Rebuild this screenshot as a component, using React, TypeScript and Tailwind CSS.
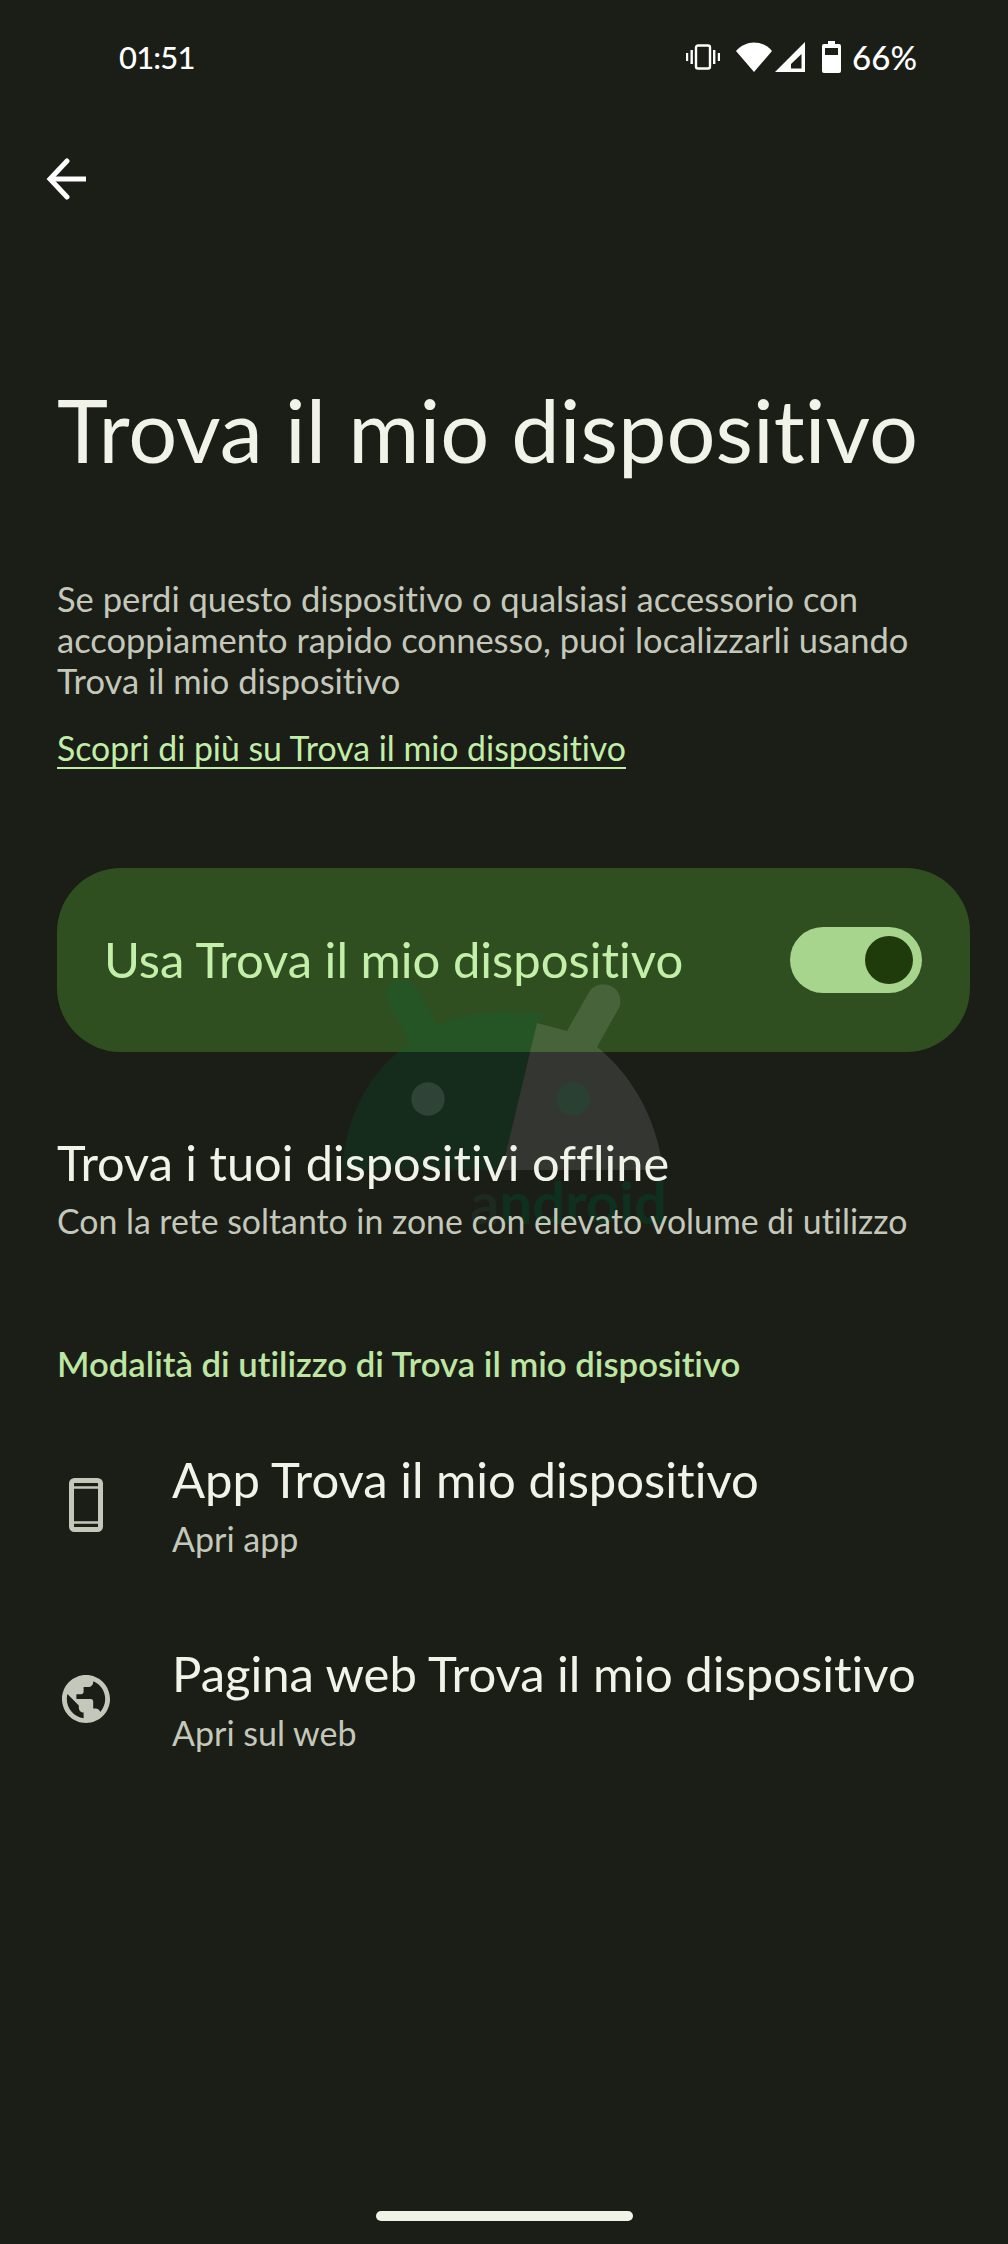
const SANS = "font-['Lato','Open_Sans',sans-serif] [font-variant-ligatures:none]";

function StatusIcons() {
  return (
    <div className="flex items-center text-white">
      {/* vibrate */}
      <svg width="34" height="26" viewBox="0 0 34 26" className="mr-[16px]" fill="none">
        <rect x="10" y="1.500" width="14" height="23" rx="2" stroke="white" strokeWidth="2.400" />
        <rect x="4.500" y="6" width="2.400" height="14" fill="white" />
        <rect x="27" y="6" width="2.400" height="14" fill="white" />
        <rect x="0" y="9" width="2.200" height="8" fill="white" />
        <rect x="31.800" y="9" width="2.200" height="8" fill="white" />
      </svg>
      {/* wifi */}
      <svg width="36" height="30" viewBox="0 0 36 30" className="mr-[3px]">
        <path d="M0 9 C10 -2.500 26 -2.500 36 9 L18 30 Z" fill="white" />
      </svg>
      {/* signal */}
      <svg width="30" height="30" viewBox="0 0 30 30" className="mr-[17px]">
        <path fillRule="evenodd" d="M30 0 V30 H0 Z M26.500 12 L16 22 V26.500 H26.500 Z" fill="white" />
      </svg>
      {/* battery */}
      <svg width="19" height="32" viewBox="0 0 19 32" className="mr-[11px]">
        <path fillRule="evenodd" d="M6 0 H13 V3 H17 Q19 3 19 5 V30 Q19 32 17 32 H2 Q0 32 0 30 V5 Q0 3 2 3 H6 Z M3 7 V14 H16 V7 Z" fill="white" />
      </svg>
      <span className="text-[33px] leading-none font-medium">66%</span>
    </div>
  );
}

function AndroidWatermark() {
  return (
    <div className="absolute z-10 left-[340px] top-[980px] w-[330px] h-[250px] pointer-events-none">
      <svg width="330" height="192" viewBox="0 0 330 192" className="absolute left-0 top-0">
        {/* left half */}
        <path
          d="M2 190 C6 135 30 90 70 63 L48 23 A16 16 0 0 1 76 7 L98 45 C130 31 175 27 208 35 L197 43 L162 190 Z"
          fill="#00713c"
          fillOpacity="0.19"
        />
        {/* right half */}
        <path
          d="M197 43 L227 51 L249.400 11.400 A17 17 0 0 1 278.600 28.600 L257 67 C296 98 318 145 323 190 L162 190 Z"
          fill="#ffffff"
          fillOpacity="0.115"
        />
        <circle cx="88" cy="119" r="16.700" fill="#ffffff" fillOpacity="0.115" />
        <circle cx="233" cy="119" r="16.700" fill="#00713c" fillOpacity="0.19" />
      </svg>
      <span className="absolute left-[130px] top-[193px] text-[58px] leading-none font-bold text-[#10301f]">
        <span className="text-[#1e2a20]">a</span>ndroid
      </span>
    </div>
  );
}

function LinkRow({ title, sub, icon, className }: { title: string; sub: string; icon: React.ReactNode; className: string }) {
  return (
    <div className={`relative z-20 flex ${className}`}>
      <div className="w-[115px] pl-[12px] shrink-0 flex items-center">{icon}</div>
      <div>
        <div className="text-[49px] leading-[58px] text-[#f1f2e8]">{title}</div>
        <div className="text-[34px] leading-[42px] mt-[10px] text-[#c4c8ba]">{sub}</div>
      </div>
    </div>
  );
}

export default function App() {
  return (
    <div className={`relative w-[1008px] h-[2244px] bg-[#1b1d17] overflow-hidden ${SANS}`}>
      {/* status bar */}
      <div className="h-[114px] pl-[119px] pr-[91px] flex items-center justify-between text-white">
        <span className="text-[31px] leading-none font-medium tracking-[-0.8px]">01:51</span>
        <StatusIcons />
      </div>

      {/* back */}
      <div className="h-[66px] mt-[32px] pl-[46px] flex items-center">
        <svg width="44" height="42" viewBox="0 0 44 42" fill="none" stroke="white" strokeWidth="5">
          <path d="M21 3 L4 21 L21 39" strokeLinecap="round" />
          <path d="M5 21 H40" />
        </svg>
      </div>

      <div className="pl-[57px] pr-[38px]">
        <h1 className="relative z-20 mt-[170px] text-[86.500px] leading-[96px] font-normal text-[#f1f2e8] whitespace-nowrap">
          Trova il mio dispositivo
        </h1>

        <p className="relative z-20 mt-[100px] text-[34.500px] leading-[41px] text-[#c4c8ba] whitespace-nowrap">
          Se perdi questo dispositivo o qualsiasi accessorio con
          <br />
          accoppiamento rapido connesso, puoi localizzarli usando
          <br />
          Trova il mio dispositivo
        </p>
        <div className="relative z-20 mt-[27px] text-[33.800px] leading-[41px] text-[#c1eea6] underline underline-offset-[6px] decoration-2">
          Scopri di più su Trova il mio dispositivo
        </div>

        <div className="mt-[99px] h-[184px] rounded-[64px] bg-[#2f4f20] pl-[47px] pr-[48px] flex items-center justify-between">
          <span className="relative z-20 text-[49px] text-[#c4efa8]">Usa Trova il mio dispositivo</span>
          <div className="relative z-20 w-[132px] h-[66px] rounded-full bg-[#a8d58e] flex items-center justify-end pr-[9px]">
            <div className="w-[48px] h-[48px] rounded-full bg-[#1f3a0b]" />
          </div>
        </div>

        <div className="relative z-20 mt-[81px] text-[48.700px] leading-[58px] text-[#f1f2e8]">Trova i tuoi dispositivi offline</div>
        <div className="relative z-20 mt-[9px] text-[33.800px] leading-[42px] text-[#c4c8ba]">
          Con la rete soltanto in zone con elevato volume di utilizzo
        </div>

        <div className="relative z-20 mt-[101px] text-[34.700px] leading-[42px] font-semibold text-[#bce6a2]">
          Modalità di utilizzo di Trova il mio dispositivo
        </div>

        <LinkRow
          className="mt-[65px]"
          title="App Trova il mio dispositivo"
          sub="Apri app"
          icon={
            <svg width="34" height="54" viewBox="0 0 34 54" fill="none">
              <rect x="2.500" y="2.500" width="29" height="49" rx="3" stroke="#c4c8ba" strokeWidth="5" />
              <path d="M3 9.500 H31 M3 44.500 H31" stroke="#c4c8ba" strokeWidth="2.500" />
            </svg>
          }
        />
        <LinkRow
          className="mt-[84px]"
          title="Pagina web Trova il mio dispositivo"
          sub="Apri sul web"
          icon={
            <svg width="48" height="48" viewBox="0 0 24 24" className="-ml-[7px]">
              <path
                fill="#c4c8ba"
                d="M12 0C5.400 0 0 5.400 0 12s5.400 12 12 12 12-5.400 12-12S18.600 0 12 0zM2.400 12c0-.9.100-1.700.300-2.500L8.400 15.200v1.200c0 1.300 1.100 2.400 2.400 2.400v2.800C6.100 21 2.400 16.900 2.400 12zm16.700 6.500c-.3-1-1.200-1.700-2.300-1.700h-1.200v-3.600c0-.7-.5-1.200-1.200-1.200H7.200V9.600h2.400c.7 0 1.200-.5 1.200-1.200V6h2.400c1.300 0 2.400-1.100 2.400-2.400v-.5c3.500 1.400 6 4.800 6 8.900 0 2.500-1 4.800-2.500 6.500z"
              />
            </svg>
          }
        />
      </div>

      <AndroidWatermark />

      {/* gesture pill */}
      <div className="absolute bottom-[23px] left-0 w-full flex justify-center">
        <div className="w-[257px] h-[10px] rounded-full bg-[#f1f2e8]" />
      </div>
    </div>
  );
}
